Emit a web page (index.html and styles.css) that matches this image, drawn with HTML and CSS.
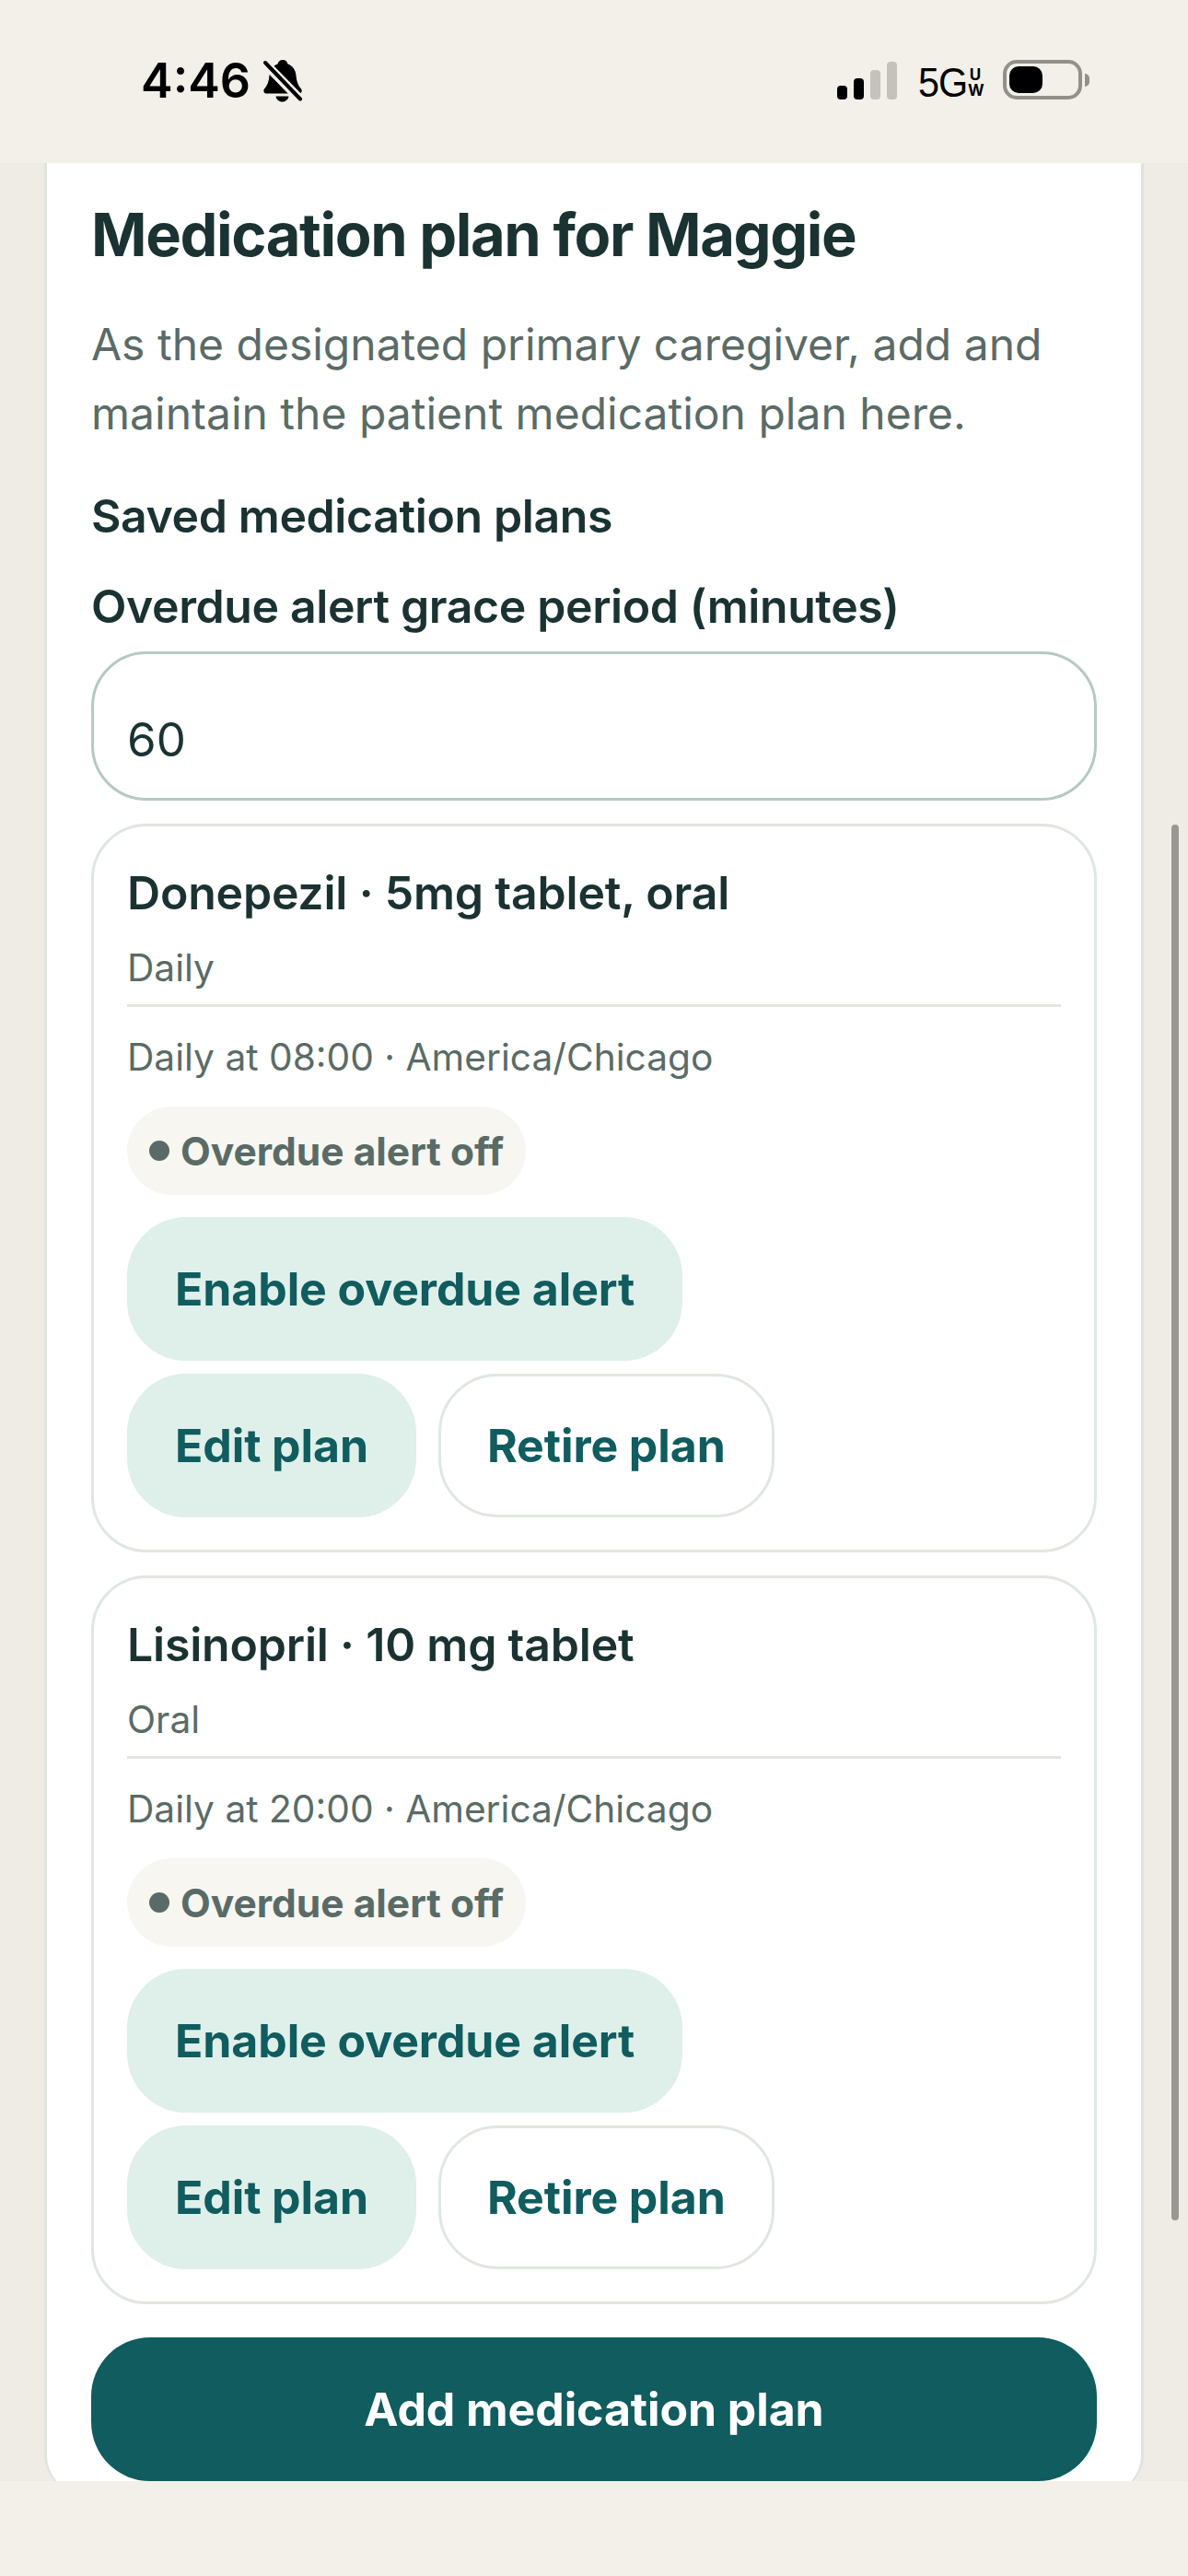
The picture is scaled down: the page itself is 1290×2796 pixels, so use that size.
FILE: index.html
```html
<!DOCTYPE html>
<html lang="en">
<head>
  <meta charset="UTF-8">
  <meta name="viewport" content="width=device-width, initial-scale=1.0">
  <title>Medication plan for Maggie</title>
  <link rel="stylesheet" href="styles.css">
</head>
<body>
  <div class="status-bar">
    <div class="status-left">
      <span class="time">4:46</span>
      <svg class="bell" width="42" height="46" viewBox="0 0 42 46">
        <path d="M21 0c3 0 5 2 5.500 4.500C32 6.500 35 11 35.500 17c.4 6 2 10.500 5.500 14.500 1.500 2 .5 5-2 5H3c-2.500 0-3.500-3-2-5C4.500 27.500 6 23 6.500 17 7 11 10 6.500 15.500 4.500 16 2 18 0 21 0z"/>
        <path d="M13.500 39.500h14c-.5 3.500-3.500 6-7 6s-6.500-2.500-7-6z"/>
        <path class="bell-gap" d="M0 2l41 42"/>
        <path class="bell-slash" d="M2 3l38 39.500"/>
      </svg>
    </div>
    <div class="status-right">
      <div class="signal">
        <i class="bar bar-1"></i>
        <i class="bar bar-2"></i>
        <i class="bar bar-3 off"></i>
        <i class="bar bar-4 off"></i>
      </div>
      <div class="network">
        <span class="net-main">5G</span>
        <span class="net-sub"><b>U</b><b>W</b></span>
      </div>
      <div class="battery">
        <div class="battery-body"><div class="battery-level"></div></div>
        <div class="battery-nub"></div>
      </div>
    </div>
  </div>

  <div class="viewport">
    <div class="panel">
      <h1>Medication plan for Maggie</h1>
      <p class="intro">As the designated primary caregiver, add and maintain the patient medication plan here.</p>
      <h2 class="saved">Saved medication plans</h2>
      <label class="field-label" for="grace">Overdue alert grace period (minutes)</label>
      <input class="field" id="grace" type="text" value="60">

      <div class="plan">
        <h3>Donepezil · 5mg tablet, oral</h3>
        <p class="plan-sub">Daily</p>
        <p class="plan-schedule">Daily at 08:00 · America/Chicago</p>
        <div class="pill"><span class="dot"></span>Overdue alert off</div>
        <div class="actions first">
          <button class="btn soft">Enable overdue alert</button>
        </div>
        <div class="actions">
          <button class="btn soft">Edit plan</button>
          <button class="btn outline">Retire plan</button>
        </div>
      </div>

      <div class="plan">
        <h3>Lisinopril · 10 mg tablet</h3>
        <p class="plan-sub">Oral</p>
        <p class="plan-schedule">Daily at 20:00 · America/Chicago</p>
        <div class="pill"><span class="dot"></span>Overdue alert off</div>
        <div class="actions first">
          <button class="btn soft">Enable overdue alert</button>
        </div>
        <div class="actions">
          <button class="btn soft">Edit plan</button>
          <button class="btn outline">Retire plan</button>
        </div>
      </div>

      <button class="btn primary">Add medication plan</button>
    </div>
    <div class="scroll-thumb"></div>
  </div>
</body>
</html>
```

FILE: styles.css
```css
* {
  margin: 0;
  padding: 0;
  box-sizing: border-box;
  font-family: 'Inter', sans-serif;
}
body {
  width: 1290px;
  height: 2796px;
  background: #f3f0e9;
  color: #1b3232;
  overflow: hidden;
}
.status-bar {
  height: 177px;
  display: flex;
  justify-content: space-between;
  padding: 65px 107px 0 153px;
}
.status-left {
  display: flex;
  align-items: flex-start;
  gap: 14px;
  color: #000;
}
.time {
  font-size: 52px;
  line-height: 46px;
  font-weight: 600;
}
.bell {
  fill: #000;
}
.bell-gap {
  stroke: #f3f0e9;
  stroke-width: 10;
}
.bell-slash {
  stroke: #000;
  stroke-width: 4;
  stroke-linecap: round;
}
.status-right {
  display: flex;
  align-items: flex-end;
  height: 43px;
}
.signal {
  display: flex;
  align-items: flex-end;
  gap: 7px;
  margin-right: 23px;
}
.bar {
  display: block;
  width: 11px;
  border-radius: 4px;
  background: #000;
}
.bar.off {
  background: #c5c2bc;
}
.bar-1 { height: 15px; }
.bar-2 { height: 23px; }
.bar-3 { height: 32px; }
.bar-4 { height: 41px; }
.network {
  display: flex;
  align-items: flex-end;
  gap: 4px;
  margin-right: 22px;
  color: #000;
}
.net-main {
  width: 50px;
  height: 36px;
  font-family: 'Liberation Sans', sans-serif;
  font-size: 45px;
  line-height: 36px;
  letter-spacing: -1px;
  transform: scaleX(0.92);
  transform-origin: left;
}
.net-sub {
  display: flex;
  flex-direction: column;
  gap: 2px;
  width: 16px;
  margin-bottom: 2px;
}
.net-sub b {
  font-size: 17px;
  line-height: 15px;
  font-weight: 700;
  text-align: center;
}
.battery {
  display: flex;
  align-items: center;
}
.battery-body {
  width: 86px;
  height: 43px;
  border: 4px solid #92908b;
  border-radius: 15px;
  padding: 3px;
}
.battery-level {
  width: 36px;
  height: 100%;
  background: #000;
  border-radius: 10px;
}
.battery-nub {
  width: 5px;
  height: 14px;
  margin-left: 3px;
  background: #92908b;
  border-radius: 0 5px 5px 0;
}
.viewport {
  position: relative;
  height: 2516px;
  padding: 0 48px;
  background: #efece5;
  overflow: hidden;
}
.panel {
  height: 2528px;
  padding: 50px 48px 0;
  background: #fff;
  border: solid #e0e4de;
  border-width: 0 3px;
  border-radius: 0 0 40px 40px;
}
h1 {
  font-size: 65px;
  line-height: 56px;
  font-weight: 700;
  letter-spacing: -1.4px;
}
.intro {
  margin-top: 53px;
  font-size: 48px;
  line-height: 75px;
  color: #5a6b67;
}
.saved {
  margin-top: 44px;
  font-size: 50px;
  line-height: 60px;
  font-weight: 600;
  letter-spacing: -0.4px;
}
.field-label {
  display: block;
  margin-top: 38px;
  font-size: 50px;
  line-height: 60px;
  font-weight: 600;
  letter-spacing: -0.4px;
}
.field {
  display: block;
  width: 100%;
  height: 162px;
  margin-top: 19px;
  padding: 29px 36px 0;
  border: 3px solid #b5c9c3;
  border-radius: 60px;
  font-size: 51px;
  color: #1b3232;
  background: #fff;
  outline: none;
}
.plan {
  margin-top: 25px;
  height: 791px;
  padding: 42px 36px 0;
  border: 3px solid #e0e7e1;
  border-radius: 60px;
}
.plan h3 {
  font-size: 50px;
  line-height: 60px;
  font-weight: 600;
  letter-spacing: -0.2px;
}
.plan-sub {
  margin-top: 27px;
  padding-bottom: 14px;
  border-bottom: 3px solid #e0e7e1;
  font-size: 40.7px;
  line-height: 50px;
  color: #5a6b67;
}
.plan-schedule {
  margin-top: 30px;
  font-size: 40.7px;
  line-height: 50px;
  color: #5a6b67;
}
.pill {
  display: flex;
  align-items: center;
  gap: 12px;
  width: fit-content;
  height: 96px;
  margin-top: 28px;
  padding: 0 24px;
  border-radius: 48px;
  background: #f7f6f1;
  color: #5a6b67;
  font-size: 42.500px;
  font-weight: 700;
}
.dot {
  width: 22px;
  height: 22px;
  border-radius: 50%;
  background: #5a6b67;
}
.actions {
  display: flex;
  gap: 24px;
  margin-top: 14px;
}
.actions.first {
  margin-top: 24px;
}
.btn {
  height: 156px;
  padding: 0 52px;
  border: none;
  border-radius: 64px;
  font-size: 50px;
  font-weight: 700;
  letter-spacing: -0.1px;
  color: #105c5f;
}
.btn.soft {
  background: #dfefe9;
}
.btn.outline {
  padding: 0 50px;
  background: #fff;
  border: 3px solid #e0e7e1;
}
.btn.primary {
  display: block;
  width: 100%;
  margin-top: 36px;
  background: #105c5f;
  color: #fff;
}
.scroll-thumb {
  position: absolute;
  top: 718px;
  left: 1272px;
  width: 8px;
  height: 1515px;
  border-radius: 4px;
  background: #989792;
}
```
